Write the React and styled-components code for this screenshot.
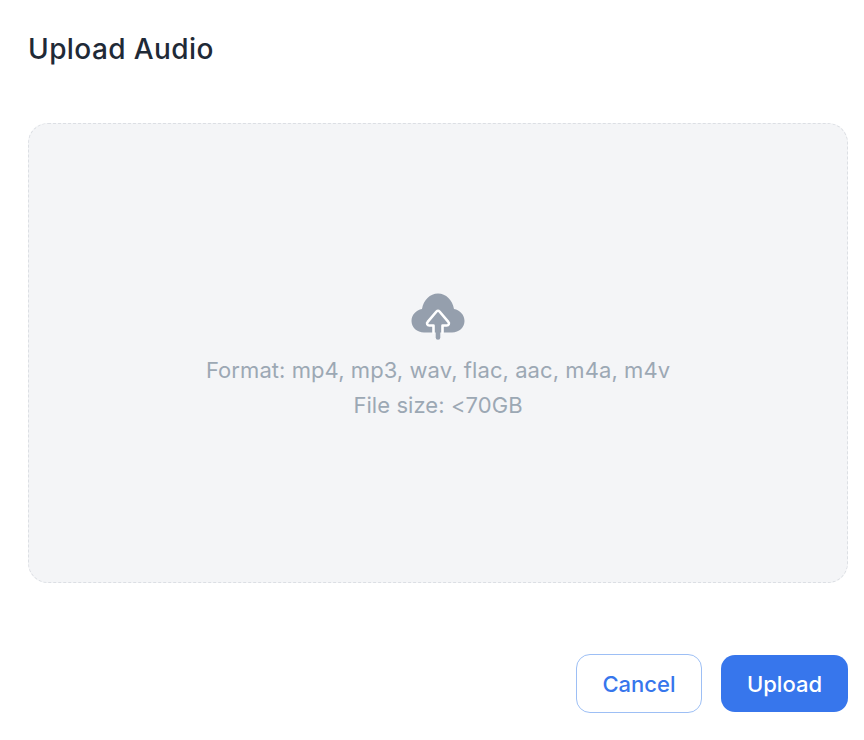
import React from "react";
import styled, { createGlobalStyle } from "styled-components";

const GlobalStyle = createGlobalStyle`
    html, body {
        margin: 0;
        padding: 0;
        background: #fff;
    }
`;

const Dialog = styled.div`
    width: 864px;
    height: 740px;
    box-sizing: border-box;
    padding: 31px 16px 0 28px;
    display: flex;
    flex-direction: column;
    font-family: Inter, "Noto Sans", sans-serif;
    overflow: hidden;
`;

const Title = styled.h1`
    margin: 0;
    height: 36px;
    font-size: 28px;
    line-height: 36px;
    font-weight: 500;
    letter-spacing: 0.4px;
    color: #1f2a37;
`;

const DropZone = styled.div`
    margin-top: 56px;
    width: 820px;
    height: 460px;
    box-sizing: border-box;
    border: 1px dashed #dcdfe4;
    border-radius: 20px;
    background: #f4f5f7;
    display: flex;
    flex-direction: column;
    align-items: center;
    padding-top: 168px;
`;

const CloudIcon = styled.svg`
    width: 56px;
    height: 48px;
    display: block;
`;

const Hint = styled.div`
    margin-top: 13px;
    font-size: 22px;
    letter-spacing: 0.07px;
    line-height: 35px;
    color: #9ca8b4;
    text-align: center;
`;

const Footer = styled.div`
    margin-top: 71px;
    display: flex;
    justify-content: flex-end;
    align-items: center;
    gap: 19px;
`;

const Button = styled.button`
    height: ${props => (props.$primary ? 57 : 59)}px;
    width: ${props => (props.$primary ? 127 : 126)}px;
    box-sizing: border-box;
    border-radius: 14px;
    border: ${props => (props.$primary ? "none" : "1px solid #9dbff5")};
    background: ${props => (props.$primary ? "#3776ec" : "#fff")};
    color: ${props => (props.$primary ? "#fff" : "#3776ec")};
    font-family: inherit;
    font-size: 22px;
    font-weight: 500;
    padding: 0;
`;

export default function App() {
    return (
        <>
            <GlobalStyle />
            <Dialog>
                <Title>Upload Audio</Title>
                <DropZone>
                    <CloudIcon viewBox="0 0 56 48">
                        <path
                            fill="#959fad"
                            d="M14 40.5C7 40.5 1.500 35.500 1.500 29c0-6 4.500-11 10.500-12C13.500 8 20 1.500 28 1.500S42.500 8 44 17c6 1 10.500 6 10.500 12 0 6.500-5.500 11.500-12.500 11.500H14z"
                        />
                        <path
                            fill="none"
                            stroke="#fff"
                            strokeWidth="2.6"
                            strokeLinecap="round"
                            strokeLinejoin="round"
                            d="M23.500 40.500V33.500h-4.200c-2 0-3-2.300-1.600-3.700l8.800-10.300c1-1.100 2-1.100 3 0l8.800 10.300c1.400 1.400 .4 3.700-1.600 3.700h-4.200v7"
                        />
                        <path fill="none" stroke="#959fad" strokeWidth="4.6" strokeLinecap="round" d="M28 26v19.500" />
                    </CloudIcon>
                    <Hint>
                        Format: mp4, mp3, wav, flac, aac, m4a, m4v
                        <br />
                        File size: &lt;70GB
                    </Hint>
                </DropZone>
                <Footer>
                    <Button>Cancel</Button>
                    <Button $primary>Upload</Button>
                </Footer>
            </Dialog>
        </>
    );
}
